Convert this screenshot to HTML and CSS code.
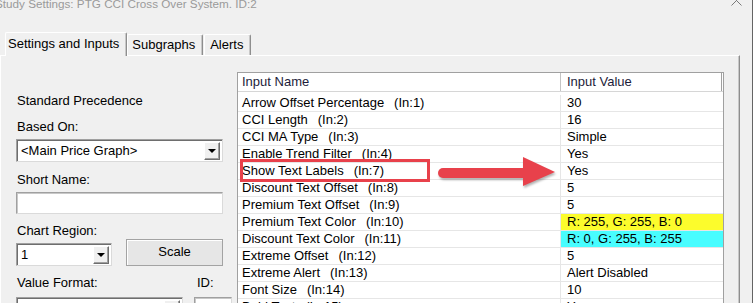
FILE: index.html
```html
<html>
<head>
    <meta charset="UTF-8">
    <title>Study Settings</title>
    <link rel="stylesheet" href="styles.css">
</head>
<body>

<div class="window">
    <div class="titlebar">
        <span class="title">Study Settings: PTG CCI Cross Over System. ID:2</span>
        <svg class="close" width="11" height="11" viewBox="0 0 11 11">
            <path d="M0.5 0.5 L10.5 10.5 M10.5 0.5 L0.5 10.5" stroke="#7a7a7a" stroke-width="1" fill="none"/>
        </svg>
    </div>

    <div class="tabs">
        <div class="tab active">Settings and Inputs</div>
        <div class="tab sub">Subgraphs</div>
        <div class="tab alerts">Alerts</div>
    </div>

    <div class="panel">
        <div class="side">
            <div class="heading">Standard Precedence</div>

            <div class="label">Based On:</div>
            <div class="select wide">
                <span>&lt;Main Price Graph&gt;</span>
                <i class="drop"></i>
            </div>

            <div class="label">Short Name:</div>
            <div class="textbox wide"></div>

            <div class="label tight">Chart Region:</div>
            <div class="region-row">
                <div class="select small">
                    <span>1</span>
                    <i class="drop"></i>
                </div>
                <button class="btn">Scale</button>
            </div>

            <div class="format-labels">
                <div class="label">Value Format:</div>
                <div class="label id-label">ID:</div>
            </div>
            <div class="format-row">
                <div class="select">
                    <span>Inherited</span>
                    <i class="drop"></i>
                </div>
                <div class="textbox"><span>2</span></div>
            </div>
        </div>

        <div class="inputs">
            <div class="head">
                <div class="name">Input Name</div>
                <div class="value">Input Value</div>
            </div>
            <div class="rows">
                <div class="row"><div class="name">Arrow Offset Percentage<span class="idx">(In:1)</span></div><div class="value">30</div></div>
                <div class="row"><div class="name">CCI Length<span class="idx">(In:2)</span></div><div class="value">16</div></div>
                <div class="row"><div class="name">CCI MA Type<span class="idx">(In:3)</span></div><div class="value">Simple</div></div>
                <div class="row"><div class="name">Enable Trend Filter<span class="idx">(In:4)</span></div><div class="value">Yes</div></div>
                <div class="row"><div class="name">Show Text Labels<span class="idx">(In:7)</span></div><div class="value">Yes</div></div>
                <div class="row"><div class="name">Discount Text Offset<span class="idx">(In:8)</span></div><div class="value">5</div></div>
                <div class="row"><div class="name">Premium Text Offset<span class="idx">(In:9)</span></div><div class="value">5</div></div>
                <div class="row"><div class="name">Premium Text Color<span class="idx">(In:10)</span></div><div class="value yellow">R: 255, G: 255, B: 0</div></div>
                <div class="row"><div class="name">Discount Text Color<span class="idx">(In:11)</span></div><div class="value cyan">R: 0, G: 255, B: 255</div></div>
                <div class="row"><div class="name">Extreme Offset<span class="idx">(In:12)</span></div><div class="value">5</div></div>
                <div class="row"><div class="name">Extreme Alert<span class="idx">(In:13)</span></div><div class="value">Alert Disabled</div></div>
                <div class="row"><div class="name">Font Size<span class="idx">(In:14)</span></div><div class="value">10</div></div>
                <div class="row"><div class="name">Bold Text<span class="idx">(In:15)</span></div><div class="value">Yes</div></div>
            </div>
        </div>
    </div>

    <!-- annotation drawn over the dialog -->
    <div class="callout"></div>
    <svg class="arrow" width="130" height="40" viewBox="0 0 130 40">
        <rect x="8" y="18" width="90" height="10" rx="5" fill="#e8414b"/>
        <polygon points="93,7 125,22 93,36" fill="#e8414b"/>
    </svg>
</div>

</body>
</html>
```

FILE: styles.css
```css
* {
    box-sizing: border-box;
}

body {
    margin: 0;
    width: 753px;
    height: 303px;
    overflow: hidden;
    background: #f0f0f0;
    font-family: "Liberation Sans", Arial, sans-serif;
    font-size: 13px;
    color: #000;
}

.window {
    position: relative;
    width: 753px;
    height: 303px;
    border-right: 1px solid #646464;
}

.titlebar {
    display: flex;
    justify-content: space-between;
    align-items: flex-start;
    height: 14px;
    overflow: hidden;
}

.title {
    font-size: 11.7px;
    line-height: 14px;
    margin-top: -3px;
    margin-left: -5px;
    color: #9a9a9a;
    white-space: nowrap;
}

.close {
    margin-top: -5px;
    margin-right: 10px;
}

/* tabs */
.tabs {
    display: flex;
    align-items: flex-end;
    margin-top: 18px;
    padding-left: 5px;
    height: 23px;
}

.tab {
    height: 21px;
    padding: 2px 7px 0 4px;
    line-height: 16px;
    border: 1px solid #fff;
    border-bottom: none;
    border-right-color: #8e8e8e;
    border-radius: 2px 2px 0 0;
    box-shadow: inset -1px 0 #c8c8c8;
    background: #f0f0f0;
    white-space: nowrap;
}

.tab.active {
    position: relative;
    z-index: 1;
    height: 24px;
    margin-bottom: -1px;
    padding: 3px 7px 0 2px;
}

.tab.alerts {
    margin-left: 1px;
    padding-left: 5px;
}

.panel {
    display: flex;
    align-items: flex-start;
    width: 740px;
    height: 260px;
    padding: 16px 0 0 15px;
    border-top: 1px solid #fff;
    border-left: 1px solid #fff;
    border-right: 1px solid #8e8e8e;
    box-shadow: inset -1px 0 #c8c8c8;
}

/* left column */
.side {
    width: 216px;
    margin-right: 5px;
    padding-top: 21px;
    flex-shrink: 0;
}

.heading,
.label {
    line-height: 16px;
    padding-left: 1px;
    white-space: nowrap;
}

.label {
    margin-top: 10px;
    margin-bottom: 4px;
}

.label.tight {
    margin-top: 9px;
    margin-bottom: 0;
}

.select,
.textbox {
    display: flex;
    align-items: center;
    background: #fff;
    border: 1px solid #a0a0a0;
    border-right-color: #dadada;
    border-bottom-color: #dadada;
    box-shadow: inset 1px 1px #6e6e6e;
}

.select {
    height: 23px;
    padding: 2px 2px 2px 4px;
}

.select span,
.textbox span {
    flex: 1;
    line-height: 16px;
    white-space: nowrap;
    overflow: hidden;
}

.textbox {
    height: 22px;
    padding-left: 4px;
    box-shadow: inset 1px 1px #c8c8c8;
}

.wide {
    width: 207px;
}

.drop {
    position: relative;
    width: 16px;
    height: 18px;
    background: #f0f0f0;
    border: 1px solid #fff;
    border-right-color: #6e6e6e;
    border-bottom-color: #6e6e6e;
    box-shadow: inset -1px -1px #a0a0a0;
}

.drop::after {
    content: "";
    position: absolute;
    left: 3px;
    top: 6px;
    border-left: 4px solid transparent;
    border-right: 4px solid transparent;
    border-top: 4px solid #000;
}

.region-row {
    display: flex;
    align-items: flex-end;
    height: 27px;
}

.select.small {
    width: 96px;
}

.btn {
    width: 97px;
    height: 27px;
    margin-left: 14px;
    font-family: inherit;
    font-size: 13px;
    color: #000;
    background: #e6e6e6;
    border: 1px solid #a3a3a3;
    box-shadow: inset 1px 1px #fff;
    padding: 0 0 2px 0;
}

.format-labels,
.format-row {
    display: grid;
    grid-template-columns: 167px 38px;
    column-gap: 11px;
}

.format-labels .label {
    margin-top: 9px;
    margin-bottom: 6px;
}

.id-label {
    padding-left: 3px;
}

.format-row .select,
.format-row .textbox {
    height: 23px;
}

/* inputs table */
.inputs {
    width: 487px;
    flex-shrink: 0;
    background: #fff;
    border: 1px solid #a0a0a0;
    border-bottom: none;
}

.head {
    display: flex;
    height: 19px;
    border-bottom: 1px solid #d6d6d6;
    color: #1c1c3a;
}

.head .name,
.head .value {
    line-height: 18px;
}

.head .value {
    width: 161px;
    border-right: 1px solid #a0a0a0;
}

.rows {
    padding-top: 3px;
}

.row {
    display: flex;
    height: 17px;
    border-bottom: 1px solid #e6e6e6;
}

.name {
    width: 323px;
    padding-left: 4px;
    border-right: 1px solid #e6e6e6;
    line-height: 16px;
    white-space: nowrap;
}

.head .name {
    border-right-color: #c4c4c4;
}

.value {
    flex: 1;
    padding-left: 6px;
    line-height: 16px;
    white-space: nowrap;
}

.head .value {
    flex: none;
}

.idx {
    margin-left: 10px;
}

.yellow {
    background: #fcfc2c;
}

.cyan {
    background: #48fdff;
}

/* annotation */
.callout {
    position: absolute;
    left: 240px;
    top: 159px;
    width: 190px;
    height: 23px;
    border: 3px solid #e8414b;
}

.arrow {
    position: absolute;
    left: 430px;
    top: 150px;
    filter: drop-shadow(1px 2px 1px rgba(0, 0, 0, 0.3));
}
```
